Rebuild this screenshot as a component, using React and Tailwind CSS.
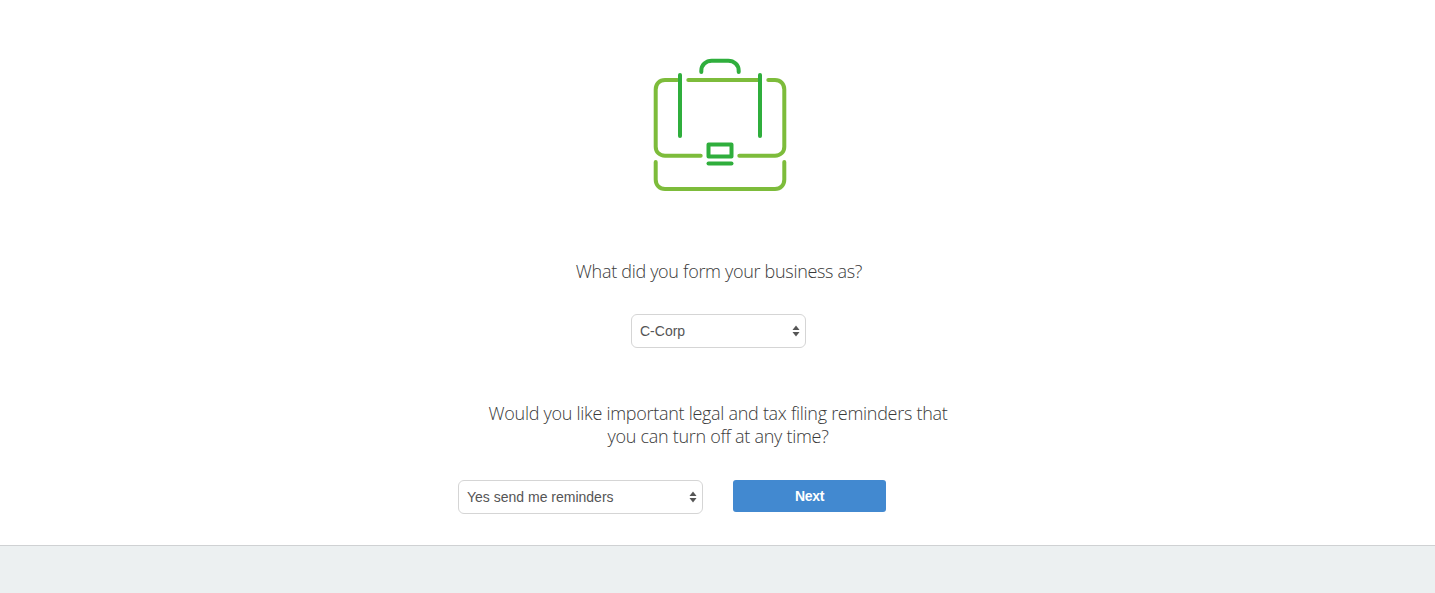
import React from 'react';

const BriefcaseIcon = () => (
  <svg width="160" height="150" viewBox="0 0 160 150" fill="none" strokeLinecap="round" strokeLinejoin="round" strokeWidth="4">
    <g stroke="#7dbc3b">
      <path d="M37.3 30H25C19.5 30 15.7 34 15.7 39.5V96.7C15.7 102 19.5 105.7 25 105.7H60.7" />
      <path d="M128.3 30H135C140.5 30 144.3 34 144.3 39.5V96.7C144.3 102 140.5 105.7 135 105.7H99.3" />
      <path d="M48.3 30H118.3" />
      <path d="M15.7 112V129.5C15.7 135 19.5 139 25 139H135C140.5 139 144.3 135 144.3 129.5V112" />
    </g>
    <g stroke="#2fae3c">
      <path d="M40 25V86" />
      <path d="M120 25V86" />
      <path d="M61.3 22V20.7C61.3 15 66 10.7 71.7 10.7H88.3C94 10.7 98.7 15 98.7 20.7V22" />
      <rect x="68.5" y="94.5" width="23" height="12" />
      <path d="M68.5 113.5H91.5" />
    </g>
  </svg>
);

const Select = ({ value, className }) => (
  <div className={`flex h-[34px] items-center justify-between rounded-[6px] border border-[#d5d5d5] bg-white pl-2 pr-[5px] font-['Liberation_Sans',sans-serif] text-[14px] text-[#555555] ${className}`}>
    <span>{value}</span>
    <svg width="8" height="12" viewBox="0 0 8 12" fill="#555555">
      <path d="M4 0.5L7.5 5H0.5Z" />
      <path d="M4 11.5L0.5 7H7.5Z" />
    </svg>
  </div>
);

export default function App() {
  return (
    <div className="flex h-[593px] flex-col bg-white font-['Open_Sans',sans-serif] text-[#3a3a3a]">
      <main className="flex h-[545px] flex-col items-center pt-[50px]">
        <div className="ml-[5px]">
          <BriefcaseIcon />
        </div>
        <h2 className="mt-[57px] ml-[3px] text-[18px] leading-[28px] font-light tracking-[-0.31px]">What did you form your business as?</h2>
        <Select value="C-Corp" className="mt-[29px] ml-[2px] w-[175px]" />
        <h2 className="mt-[54px] ml-[1px] w-[480px] text-center text-[18px] leading-[23px] font-light tracking-[-0.29px]">
          Would you like important legal and tax filing reminders that you can turn off at any time?
        </h2>
        <div className="mt-[32px] ml-[-91px] flex items-start gap-[30px]">
          <Select value="Yes send me reminders" className="w-[245px]" />
          <button className="h-[32px] w-[153px] rounded-[3px] bg-[#4289d0] font-['Liberation_Sans',sans-serif] text-[14px] font-bold tracking-[-0.3px] text-white">
            Next
          </button>
        </div>
      </main>
      <footer className="flex-1 border-t border-[#cfd1d3] bg-[#ecf0f1]" />
    </div>
  );
}
